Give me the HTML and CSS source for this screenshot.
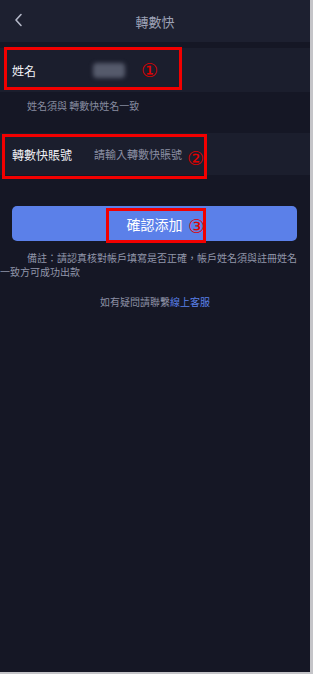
FILE: index.html
```html
<!DOCTYPE html>
<html lang="zh-Hant">
<head>
<meta charset="utf-8">
<title>轉數快</title>
<link rel="stylesheet" href="styles.css">
</head>
<body>
<div class="page">
  <header class="topbar">
    <svg class="back" width="10" height="14" viewBox="0 0 10 14"><path d="M7 1.5 L2 7 L7 12.5" fill="none" stroke="#b4b8c8" stroke-width="1.6" stroke-linecap="round" stroke-linejoin="round"/></svg>
    <h1 class="title">轉數快</h1>
  </header>

  <div class="row row-name">
    <span class="label">姓名</span>
    <span class="blurred"></span>
    <div class="mark mark-1"><span class="num num-1">①</span></div>
  </div>
  <p class="hint">姓名須與 轉數快姓名一致</p>

  <div class="row row-acc">
    <span class="label">轉數快賬號</span>
    <span class="placeholder">請輸入轉數快賬號</span>
    <div class="mark mark-2"><span class="num num-2">②</span></div>
  </div>

  <div class="btn">
    <span class="btn-text">確認添加</span>
    <div class="mark mark-3"><span class="num num-3">③</span></div>
  </div>

  <p class="note">備註：請認真核對帳戶填寫是否正確，帳戶姓名須與註冊姓名一致方可成功出款</p>

  <p class="contact">如有疑問請聯繫<span class="link">線上客服</span></p>
</div>
</body>
</html>
```

FILE: styles.css
```css
html {
  background: #c4c4c8;
}
body {
  margin: 0;
  font-family: "Noto Sans CJK TC", "Noto Sans CJK SC", "Noto Sans", sans-serif;
}
.page {
  width: 310px;
  height: 672px;
  background: #151725;
  overflow: hidden;
}
.topbar {
  height: 42px;
  background: #1d2030;
  display: flex;
  align-items: center;
  justify-content: center;
  position: relative;
}
.back {
  position: absolute;
  left: 14px;
  top: 13px;
}
.title {
  margin: 0;
  font-size: 13px;
  font-weight: normal;
  color: #9da2b6;
}
.row {
  position: relative;
  display: flex;
  align-items: center;
  background: #1b1e2d;
  padding-left: 12px;
}
.row-name {
  margin-top: 6px;
  height: 44px;
}
.row-acc {
  margin-top: 19px;
  height: 42px;
}
.label {
  font-size: 12px;
  color: #f2f3f7;
}
.row-name .label {
  width: 81px;
}
.row-acc .label {
  width: 82px;
}
.blurred {
  width: 32px;
  height: 15px;
  background: #555a6b;
  border-radius: 4px;
  filter: blur(2px);
}
.placeholder {
  font-size: 11px;
  color: #8c90a4;
}
.hint {
  margin: 6px 0 0;
  padding-left: 27px;
  font-size: 10px;
  line-height: 16px;
  color: #878ca0;
}
.mark {
  position: absolute;
  border: 3px solid #f20000;
  box-sizing: border-box;
}
.mark-1 {
  left: 4px;
  top: -1px;
  width: 178px;
  height: 43px;
}
.mark-2 {
  left: 2px;
  top: 1px;
  width: 205px;
  height: 45px;
}
.mark-3 {
  left: 94px;
  top: 2px;
  width: 100px;
  height: 35px;
}
.num {
  position: absolute;
  color: #e00000;
  font-family: "DejaVu Sans", "Noto Sans CJK TC", sans-serif;
  font-size: 19px;
  line-height: 20px;
}
.num-1 {
  left: 134px;
  top: 10px;
}
.num-2 {
  left: 182px;
  top: 11px;
}
.num-3 {
  left: 79px;
  top: 5px;
}
.btn {
  position: relative;
  margin: 31px 13px 0 12px;
  height: 35px;
  background: #5b80e9;
  border-radius: 5px;
  display: flex;
  align-items: center;
  justify-content: center;
}
.btn-text {
  font-size: 14px;
  color: #ffffff;
}
.note {
  margin: 10px 13px 0 0;
  text-indent: 27px;
  font-size: 10px;
  line-height: 14px;
  color: #9196aa;
}
.contact {
  margin: 16px 0 0;
  text-align: center;
  font-size: 10px;
  line-height: 14px;
  color: #8c90a4;
}
.link {
  color: #5b80e9;
}
```
